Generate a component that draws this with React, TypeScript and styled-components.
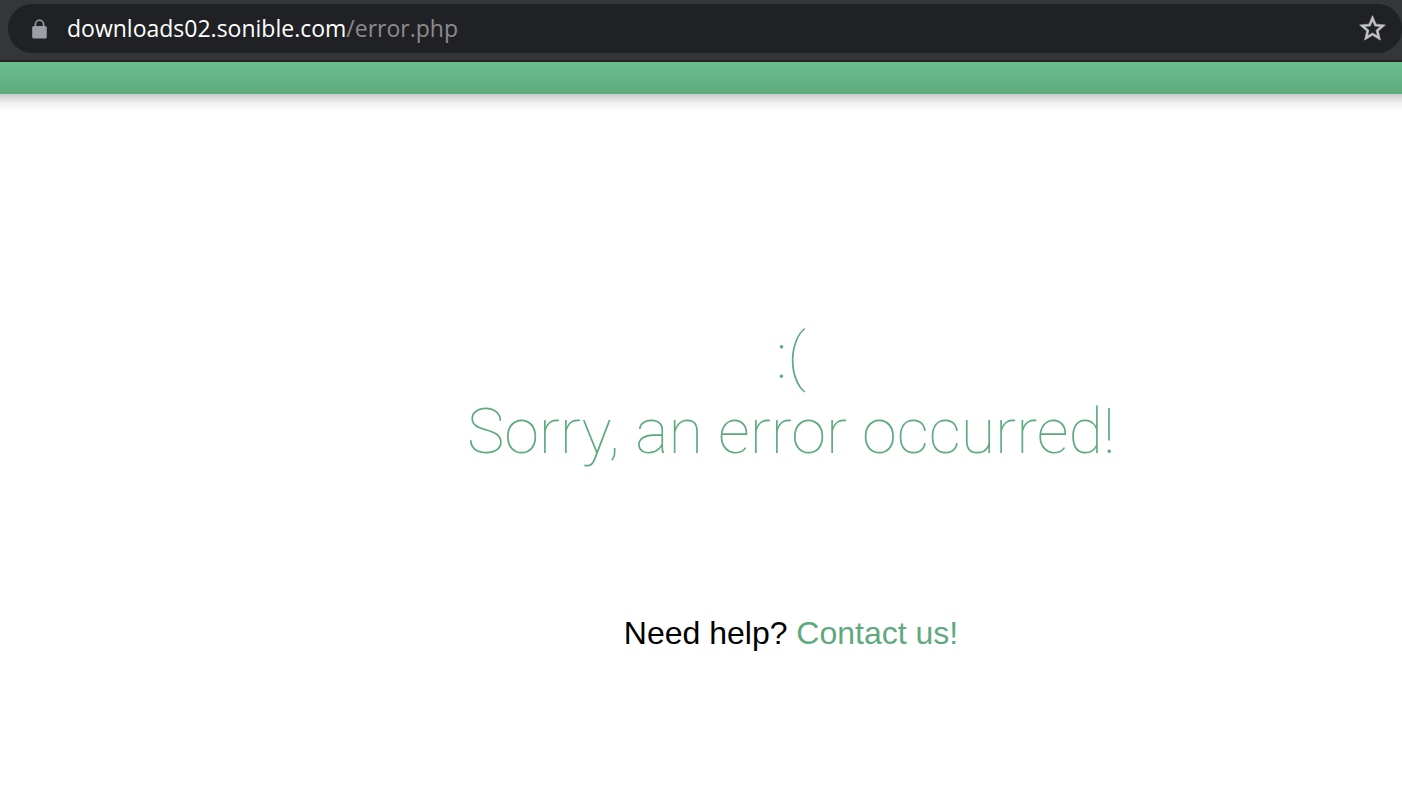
import React from "react";
import styled, { createGlobalStyle } from "styled-components";

const GlobalStyle = createGlobalStyle`
  * { box-sizing: border-box; }
  body { margin: 0; background: #fff; }
`;

const Page = styled.div`
  min-height: 100vh;
  overflow-x: hidden;
`;

const Toolbar = styled.header`
  position: relative;
  z-index: 1;
  display: flex;
  height: 62px;
  padding: 4px 0 7px 8px;
  background: #35363a;
  border-bottom: 2px solid #242528;
`;

const AddressBar = styled.div`
  flex: 1;
  display: flex;
  align-items: center;
  height: 49px;
  padding: 0 14px 0 22px;
  border-radius: 25px;
  background: #202124;
`;

const IconButton = styled.button`
  display: flex;
  padding: 0;
  border: 0;
  background: none;
  color: #9aa0a6;
`;

const Address = styled.div`
  flex: 1;
  padding: 0 0 2px 19px;
  font: 23px/34px "Open Sans", "Noto Sans", sans-serif;
  color: #fff;
`;

const Path = styled.span`
  color: #8b8b8c;
`;

const Banner = styled.div`
  height: 32px;
  margin: 0 -20px;
  background: linear-gradient(#6bbd8d, #5eaa7e);
  box-shadow: 0 0 16px 2px rgba(0, 0, 0, 0.35);
`;

const Main = styled.main`
  display: flex;
  flex-direction: column;
  align-items: center;
  padding: 225px 0 0 180px;
  text-align: center;
`;

const Title = styled.h1`
  margin: 0;
  font: 100 63px/75px Roboto, sans-serif;
  color: #5eaa7e;
`;

const Help = styled.p`
  margin: 145px 0 0;
  font: 32px/38px "Liberation Sans", Arial, sans-serif;
  color: #000;
`;

const ContactLink = styled.a`
  color: #5eaa7e;
  text-decoration: none;
`;

export default function App() {
  return (
    <Page>
      <GlobalStyle />
      <Toolbar>
        <AddressBar>
          <IconButton aria-label="View site information">
            <svg width="18" height="22" viewBox="0 0 18 22">
              <path d="M5.4 9V6.4a4.1 4.1 0 0 1 8.2 0V9" fill="none" stroke="currentColor" strokeWidth="1.6" />
              <rect x="2.2" y="8" width="14.6" height="12.6" rx="1.6" fill="currentColor" />
            </svg>
          </IconButton>
          <Address>
            downloads02.sonible.com<Path>/error.php</Path>
          </Address>
          <IconButton aria-label="Bookmark this page">
            <svg width="31" height="31" viewBox="0 0 24 24" fill="#c4c4c4" stroke="#c4c4c4" strokeWidth="0.4">
              <path d="M22 9.24l-7.19-.62L12 2 9.19 8.63 2 9.24l5.46 4.73L5.82 21 12 17.27 18.18 21l-1.63-7.03L22 9.24zM12 15.4l-3.76 2.27 1-4.28-3.32-2.88 4.38-.38L12 6.1l1.71 4.04 4.38.38-3.32 2.88 1 4.28L12 15.4z" />
            </svg>
          </IconButton>
        </AddressBar>
      </Toolbar>
      <Banner />
      <Main>
        <Title>
          :(
          <br />
          Sorry, an error occurred!
        </Title>
        <Help>
          Need help? <ContactLink href="#contact">Contact us!</ContactLink>
        </Help>
      </Main>
    </Page>
  );
}
